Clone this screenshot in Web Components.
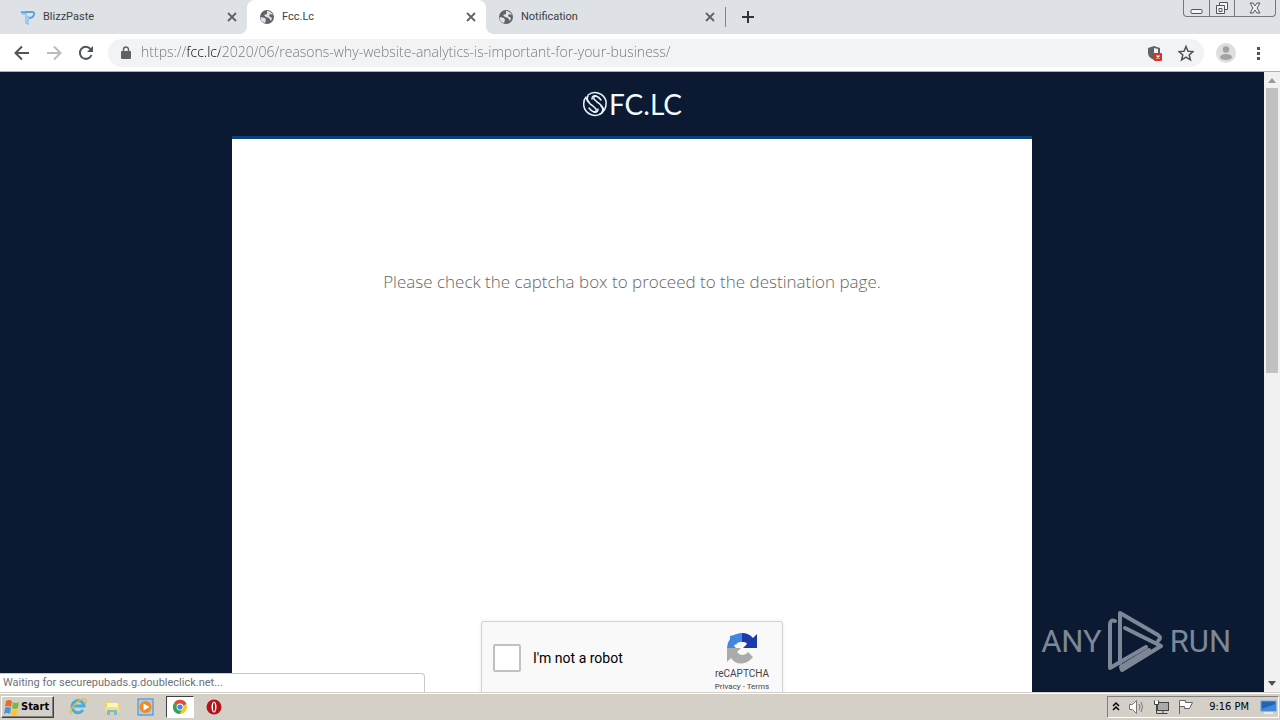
<!DOCTYPE html>
<html lang="en">
<head>
<meta charset="utf-8">
<title>Fcc.Lc</title>
<style>
    html, body { height: 100%; }
    body {
        margin: 0;
        display: flex;
        flex-direction: column;
        overflow: hidden;
        background: #d4d0c8;
        font: 12px/16px "Open Sans", "Noto Sans", sans-serif;
        color: #3c4043;
    }
</style>
</head>
<body>
<tab-strip>
    <browser-tab label="BlizzPaste"><svg slot="icon" width="16" height="16" viewBox="0 0 16 16"><path d="M1 3q3 1 5 0h6q3 0 2 3-1 3-5 3" fill="none" stroke="#5fa3d8" stroke-width="2"/><path d="M2 5h4v9l2 1V7" stroke="#8fc2ea" stroke-width="1.500" fill="none"/></svg></browser-tab>
    <browser-tab label="Fcc.Lc" active><globe-icon slot="icon"></globe-icon></browser-tab>
    <browser-tab label="Notification"><globe-icon slot="icon"></globe-icon></browser-tab>
</tab-strip>
<tool-bar url="https://fcc.lc/2020/06/reasons-why-website-analytics-is-important-for-your-business/"></tool-bar>
<page-view>
    <site-logo slot="header"></site-logo>
    <p>Please check the captcha box to proceed to the destination page.</p>
    <captcha-box label="I'm not a robot"></captcha-box>
    <run-watermark slot="overlay"></run-watermark>
    <status-bubble slot="overlay">Waiting for securepubads.g.doubleclick.net...</status-bubble>
</page-view>
<task-bar time="9:16 PM"></task-bar>

<script>
function define(name, html, setup)
{
    const template = document.createElement("template");
    template.innerHTML = html;

    window.customElements.define(name, class extends HTMLElement {
        constructor()
        {
            super();
            this.attachShadow({mode: "open"});
            this.shadowRoot.append(template.content.cloneNode(true));
        }

        connectedCallback()
        {
            if (setup)
                setup(this, this.shadowRoot);
        }
    });
}

define("globe-icon", `
    <style>
        :host { display: block; width: 16px; height: 16px; }
        svg { display: block; }
    </style>
    <svg width="16" height="16" viewBox="0 0 16 16">
        <circle cx="8" cy="8" r="7" fill="#5f6368"/>
        <path d="M2 8l4 1 1 2-1 3C3 13 1 11 2 8zM8 2c3 0 5 2 6 4l-3-1-1 2 3 2-1 3-2-3-3-1-2-2 3-1z" fill="#dee1e6"/>
    </svg>
`);

define("browser-tab", `
    <style>
        :host {
            flex: 0 1 239px;
            display: flex;
            align-items: center;
            gap: 7px;
            height: 34px;
            padding: 0 9px 0 12px;
            box-sizing: border-box;
            position: relative;
            font: 11px/16px Roboto, sans-serif;
            color: #3c4043;
        }
        :host([active]) { background: #fff; border-radius: 8px 8px 0 0; }
        :host([active])::before, :host([active])::after {
            content: "";
            position: absolute;
            bottom: 0;
            width: 8px;
            height: 8px;
        }
        :host([active])::before { left: -8px; background: radial-gradient(circle at 0 0, #dee1e6 8px, #fff 8px); }
        :host([active])::after { right: -8px; background: radial-gradient(circle at 100% 0, #dee1e6 8px, #fff 8px); }
        span { flex: 1; white-space: nowrap; overflow: hidden; }
        button { border: 0; padding: 0; background: none; width: 12px; height: 12px; }
        svg { display: block; }
    </style>
    <slot name="icon"></slot>
    <span></span>
    <button aria-label="Close tab"><svg width="12" height="12" viewBox="0 0 12 12"><path d="M2 2l8 8M10 2l-8 8" stroke="#5f6368" stroke-width="1.8"/></svg></button>
`, (host, root) => {
    root.querySelector("span").textContent = host.getAttribute("label");
});

define("tab-strip", `
    <style>
        :host { display: flex; height: 34px; padding-left: 8px; background: #dee1e6; flex: none; }
        .new { display: flex; align-items: center; border: 0; border-left: 1px solid #80868b; margin: 7px 0; padding: 0 15px; background: none; }
        .window {
            display: flex;
            align-self: flex-start;
            margin: 0 4px 0 auto;
            border: 1px solid #74787e;
            border-top: 0;
            border-radius: 0 0 4px 4px;
        }
        .window button { display: grid; place-items: center; height: 16px; width: 25px; padding: 0; border: 0; background: none; }
        .window button + button { border-left: 1px solid #74787e; }
        .window button:last-child { width: 41px; }
    </style>
    <slot></slot>
    <button class="new" aria-label="New tab"><svg width="14" height="14" viewBox="0 0 14 14"><path d="M7 1v12M1 7h12" stroke="#303438" stroke-width="2"/></svg></button>
    <div class="window">
        <button aria-label="Minimize"><svg width="13" height="14" viewBox="0 0 13 14"><rect x="1" y="8.500" width="11" height="4" rx="1" fill="#f6f6f6" stroke="#50555c"/></svg></button>
        <button aria-label="Restore"><svg width="14" height="14" viewBox="0 0 14 14"><path d="M4.500 1.500h8v7h-8z" fill="#f4f4f4" stroke="#50555c"/><path d="M1.500 4.500h8v8h-8zM4 7.500h3v3H4z" fill="#f4f4f4" stroke="#50555c"/></svg></button>
        <button aria-label="Close"><svg width="14" height="14" viewBox="0 0 14 14"><path d="M2 2h3l2 3 2-3h3L9 7l3 5H9L7 9l-2 3H2l3-5z" fill="#f4f4f4" stroke="#50555c"/></svg></button>
    </div>
`);

define("tool-bar", `
    <style>
        :host {
            display: flex;
            align-items: center;
            gap: 12px;
            height: 37px;
            padding: 0 12px 0 14px;
            border-bottom: 1px solid #a9b1ba;
            background: #fff;
            flex: none;
        }
        button { display: block; border: 0; padding: 0; background: none; height: 20px; }
        svg { display: block; }
        .nav { display: flex; gap: 16px; padding-right: 2px; }
        .nav button { width: 16px; }
        form { display: flex; align-items: center; flex: 1; gap: 7px; height: 28px; padding: 0 10px; border-radius: 14px; background: #f1f3f4; }
        input {
            flex: 1;
            min-width: 0;
            height: 24px;
            border: 0;
            padding: 0 0 2px;
            box-sizing: border-box;
            outline: 0;
            font: 300 14px/22px "Open Sans", "Noto Sans", sans-serif;
            color: #70757a;
            -webkit-text-fill-color: transparent;
            background: linear-gradient(90deg, #70757a 46px, #000 46px 79px, #70757a 79px);
            background-clip: text;
            -webkit-background-clip: text;
        }
        .tail { display: flex; gap: 15px; }
    </style>
    <div class="nav">
        <button aria-label="Back"><svg width="16" height="16" viewBox="0 0 16 16"><path d="M15 8H2M8 1.500L1.500 8 8 14.500" fill="none" stroke="#50555a" stroke-width="2"/></svg></button>
        <button aria-label="Forward" disabled><svg width="16" height="16" viewBox="0 0 16 16"><path d="M1 8h13M8 1.500L14.500 8 8 14.500" fill="none" stroke="#babcbe" stroke-width="2"/></svg></button>
        <button aria-label="Reload"><svg width="16" height="16" viewBox="0 0 16 16"><path d="M13.500 10A6 6 0 1 1 12.500 4" fill="none" stroke="#50555a" stroke-width="2"/><path d="M15 1v6H9z" fill="#50555a"/></svg></button>
    </div>
    <form>
        <svg width="16" height="16" viewBox="0 0 16 16"><rect x="3" y="6" width="10" height="8" rx="1" fill="#5f6368"/><path d="M5.500 7V4.500a2.500 2.500 0 0 1 5 0V7" fill="none" stroke="#5f6368" stroke-width="1.500"/></svg>
        <input type="text" aria-label="Address" spellcheck="false">
        <div class="tail">
            <button type="button" aria-label="Blocked content"><svg width="16" height="20" viewBox="0 0 16 20"><path d="M7 3l6 2v5c0 3-3 6-6 7-4-2-6-4-6-7V5z" fill="#5f6368"/><path d="M7 5l4 1v4H7z" fill="#f1f3f4"/><rect x="7" y="10" width="8" height="8" rx="1" fill="#d93025"/><path d="M9.500 12.500l3 3M12.500 12.500l-3 3" stroke="#fff" stroke-width="1.200"/></svg></button>
            <button type="button" aria-label="Bookmark"><svg width="16" height="20" viewBox="0 0 16 20"><path d="M8 3.500l2 4.700 5 .4-3.800 3.300 1.200 5L8 14.200l-4.400 2.700 1.200-5L1 8.600l5-.4z" fill="none" stroke="#50555a" stroke-width="1.500"/></svg></button>
        </div>
    </form>
    <button aria-label="Profile"><svg width="20" height="20" viewBox="0 0 20 20"><circle cx="10" cy="10" r="10" fill="#dedede"/><circle cx="10" cy="6.500" r="3.200" fill="#a2a2a2"/><ellipse cx="10" cy="14" rx="6" ry="3" fill="#a2a2a2"/></svg></button>
    <button aria-label="Menu"><svg width="20" height="20" viewBox="0 0 20 20"><path d="M9 4h3v3H9zM9 9h3v3H9zM9 14h3v3H9z" fill="#50555a"/></svg></button>
`, (host, root) => {
    root.querySelector("input").value = host.getAttribute("url");
});

define("site-logo", `
    <style>
        :host { display: flex; align-items: center; justify-content: center; height: 64px; }
        a { display: flex; align-items: center; gap: 1px; color: #f2fbff; text-decoration: none; font: 28px/32px Lato, sans-serif; }
    </style>
    <a href="#">
        <svg width="26" height="26" viewBox="0 0 26 26" fill="none" stroke="#e4f4fa" stroke-width="1.500" stroke-linecap="round">
            <path d="M6 4A11.500 11.500 0 0 1 24 10Q25 19 18 23"/>
            <path d="M20 22A11.500 11.500 0 0 1 2 16Q1 9 4 6"/>
            <path d="M4 7q2 5 7 8l3 3q1 3-2 3-3-1-5-4"/>
            <path d="M22 19q-2-5-7-8l-3-3q-1-3 2-3 3 1 5 4"/>
            <path d="M6 5q-2 3 1 6M20 21q2-3-1-6M14 5q-4-1-4 3M12 21q4 1 4-3"/>
        </svg>
        <span>FC.LC</span>
    </a>
`);

define("captcha-box", `
    <style>
        :host {
            display: flex;
            align-items: flex-start;
            width: 300px;
            height: 76px;
            border: 1px solid #d3d3d3;
            border-radius: 3px;
            background: #f9f9f9;
            box-shadow: 0 0 4px rgba(0, 0, 0, .08);
            color: #000;
            font: 14px/18px Roboto, sans-serif;
        }
        label { display: flex; align-items: center; gap: 12px; height: 72px; padding-left: 11px; flex: 1; }
        input { appearance: none; width: 28px; height: 28px; margin: 0; border: 2px solid #c1c1c1; border-radius: 2px; background: #fff; }
        .brand { display: flex; flex-direction: column; align-items: center; width: 80px; padding-top: 10px; color: #444; font: 10px/14px Roboto, sans-serif; }
        .brand svg { margin-bottom: 3px; }
        nav { font-size: 8px; line-height: 12px; }
        a { color: inherit; text-decoration: none; }
    </style>
    <label><input type="checkbox"><span></span></label>
    <div class="brand">
        <svg width="32" height="32" viewBox="0 0 32 32">
            <path d="M16 1C11 1 7 3 4 7l6 6c1-3 3-4 6-3z" fill="#4a90e8"/>
            <path d="M4 4v3a15 15 0 0 0-3 9h9l-2-2c1-2 3-4 8-4V1z" fill="#4285e4"/>
            <path d="M16 1a15 15 0 0 1 11 5l4-4v14H17l4-4c-1-2-3-2-5-2z" fill="#1c3aa9"/>
            <path d="M1 16h14l-4 4c3 4 8 4 11 0l5 5C20 34 9 33 5 26l-4 4z" fill="#ababab"/>
        </svg>
        <span>reCAPTCHA</span>
        <nav><a href="#">Privacy</a> - <a href="#">Terms</a></nav>
    </div>
`, (host, root) => {
    root.querySelector("label span").textContent = host.getAttribute("label");
});

define("run-watermark", `
    <style>
        :host {
            position: absolute;
            right: 49px;
            bottom: 18px;
            display: flex;
            align-items: center;
            gap: 6px;
            color: #7d8796;
            font: 31px/64px Roboto, sans-serif;
        }
    </style>
    <span>ANY</span>
    <svg width="56" height="62" viewBox="5 3 56 62" fill="none" stroke="#7d8796" stroke-width="4" stroke-linejoin="round" stroke-linecap="round">
        <path d="M12 13Q7 11 7 17v43l36-21"/>
        <path d="M17 55V5l38 22q4 3 0 6"/>
        <path d="M22 20l36 18-39 24-1-3 28-17"/>
    </svg>
    <span>RUN</span>
`);

define("status-bubble", `
    <style>
        :host {
            position: absolute;
            left: 0;
            bottom: 0;
            box-sizing: border-box;
            width: 425px;
            height: 19px;
            padding-left: 3px;
            border: 1px solid #c8c8c8;
            border-width: 1px 1px 0 0;
            border-radius: 0 4px 0 0;
            background: #fff;
            color: #6e7276;
            font: 11px/18px Roboto, sans-serif;
            white-space: nowrap;
        }
    </style>
    <slot></slot>
`);

define("page-view", `
    <style>
        :host { flex: 1; min-height: 0; display: flex; position: relative; background: #0b1a32; }
        .page { flex: 1; min-width: 0; overflow: hidden; }
        main {
            display: flex;
            flex-direction: column;
            align-items: center;
            box-sizing: border-box;
            max-width: 800px;
            min-height: 900px;
            margin: 0 auto;
            padding: 128px 16px 0;
            border-top: 3px solid #0b427c;
            background: #fff;
        }
        ::slotted(p) { margin: 0 0 324px; color: #666; font: 300 17px/30px "Open Sans", sans-serif; }
        .scroll { display: flex; flex-direction: column; align-items: center; width: 16px; background: #f1f1f1; }
        .scroll svg { flex: none; }
        .track { flex: 1; width: 12px; }
        .thumb { height: 48.5%; background: #c1c1c1; }
    </style>
    <div class="page">
        <slot name="header"></slot>
        <main><slot></slot></main>
    </div>
    <div class="scroll">
        <svg width="16" height="16"><path d="M4 11l4-5 4 5z" fill="#9a9a9a"/></svg>
        <div class="track"><div class="thumb"></div></div>
        <svg width="16" height="16"><path d="M4 5h8l-4 5z" fill="#505050"/></svg>
    </div>
    <slot name="overlay"></slot>
`);

define("task-bar", `
    <style>
        :host {
            display: flex;
            align-items: center;
            box-sizing: border-box;
            height: 28px;
            padding: 1px 1px 0;
            border-top: 1px solid #d4d0c8;
            box-shadow: inset 0 1px #fff;
            background: #d4d0c8;
            color: #000;
            font: 11px/16px "DejaVu Sans Condensed", "DejaVu Sans", sans-serif;
            flex: none;
        }
        button { display: grid; place-items: center; width: 28px; height: 22px; padding: 0; border: 0; background: none; }
        svg { display: block; }
        .start {
            display: flex;
            align-items: center;
            gap: 1px;
            width: 53px;
            padding-left: 1px;
            border: 1px solid;
            border-color: #fff #404040 #404040 #fff;
            box-shadow: inset -1px -1px #808080;
            font: bold 11px/16px "DejaVu Sans Condensed", "DejaVu Sans", sans-serif;
        }
        .apps { display: flex; gap: 6px; margin-left: 10px; flex: 1; }
        .apps .on { border: 1px solid; border-color: #404040 #fff #fff #404040; background: #fff; }
        .tray { display: flex; align-items: center; gap: 7px; height: 20px; padding: 0 1px 0 3px; border: 1px solid; border-color: #808080 #fff #fff #808080; }
        time { padding: 0 4px 0 8px; }
    </style>
    <button class="start">
        <svg width="17" height="17" viewBox="0 0 17 17"><path d="M3 2q3-2 6 0L8 8Q5 6 2 8z" fill="#ee6a2c"/><path d="M10 3q3 2 6 0l-1 6q-3 2-6 0z" fill="#7ab841"/><path d="M2 9q3-2 6 0l-1 6q-3-2-6 0z" fill="#4a94dc"/><path d="M9 10q3 2 6 0l-1 6q-3 2-6 0z" fill="#f6c538"/></svg>
        <span>Start</span>
    </button>
    <div class="apps">
        <button aria-label="Internet Explorer"><svg width="18" height="18" viewBox="0 0 18 18"><path d="M14 12a6 6 0 1 1 1-4H5" fill="none" stroke="#42aee5" stroke-width="3"/><path d="M2 16C-1 14 8 1 15 1c3 0 2 3 1 5" fill="none" stroke="#e7b83d" stroke-width="1.500"/></svg></button>
        <button aria-label="Explorer"><svg width="18" height="18" viewBox="0 0 18 18"><path d="M2 3h6l1 2h7v10H2z" fill="#efd26b"/><path d="M4 5h11v5H4z" fill="#fff5bd"/><path d="M2 9h14v5H2z" fill="#f6df83"/><path d="M4 17v-5h10v5h-3v-3H7v3z" fill="#75bce4"/></svg></button>
        <button aria-label="Media Player"><svg width="18" height="18" viewBox="0 0 18 18"><rect x="1" y="1" width="15" height="16" fill="#a9ceec" stroke="#4b86b8"/><circle cx="8.500" cy="9" r="6" fill="#f28a19"/><path d="M6.500 5.500l6 3.500-6 3.500z" fill="#fff"/></svg></button>
        <button class="on" aria-label="Chrome"><svg width="16" height="16" viewBox="0 0 16 16"><circle cx="8" cy="8" r="7" fill="#f9c822"/><path d="M8 8L2 4.200A7 7 0 0 1 14.500 5z" fill="#dd4b3e"/><path d="M8 8L2 4.200A7 7 0 0 0 7.500 15L11 9z" fill="#35a353"/><circle cx="8" cy="8" r="3.400" fill="#fff"/><circle cx="8" cy="8" r="2.600" fill="#4487ef"/></svg></button>
        <button aria-label="Opera"><svg width="18" height="18" viewBox="0 0 18 18"><circle cx="9" cy="9" r="7.500" fill="#b3141b"/><ellipse cx="9" cy="9" rx="2.500" ry="5.500" fill="#fff"/><ellipse cx="9" cy="9" rx="1" ry="4.500" fill="#b3141b"/></svg></button>
    </div>
    <div class="tray">
        <svg width="10" height="14" viewBox="0 0 10 14"><path d="M2 6l3-3 3 3M2 10l3-3 3 3" fill="none" stroke="#000" stroke-width="1.500"/></svg>
        <svg width="18" height="16" viewBox="0 0 18 16"><path d="M1.500 5.500h3l4-4v13l-4-4h-3z" fill="#fff" stroke="#777"/><path d="M11 5q2 3 0 6M13 3q3 5 0 10" fill="none" stroke="#777"/></svg>
        <svg width="17" height="16" viewBox="0 0 17 16"><rect x="4.500" y="3.500" width="11" height="8" fill="#aaa" stroke="#444"/><path d="M1.500 1.500v4h4v-4M3.500 6v8.500h11M10 12v2" fill="none" stroke="#444"/><path d="M2 2h3v3H2z" fill="#fff"/></svg>
        <svg width="17" height="16" viewBox="0 0 17 16"><path d="M2.500 15V1.500h6v2h7l-3 6h-5v-2h-5" fill="#fff" stroke="#666"/></svg>
        <time></time>
        <svg width="17" height="14" viewBox="0 0 17 14"><rect x="1" y="1" width="15" height="10" fill="#2462b5" stroke="#6b9fdb"/><path d="M1 9L16 4v7H1z" fill="#3f8add"/><path d="M4 13h9" stroke="#fff"/></svg>
    </div>
`, (host, root) => {
    root.querySelector("time").textContent = host.getAttribute("time");
});
</script>
</body>
</html>
